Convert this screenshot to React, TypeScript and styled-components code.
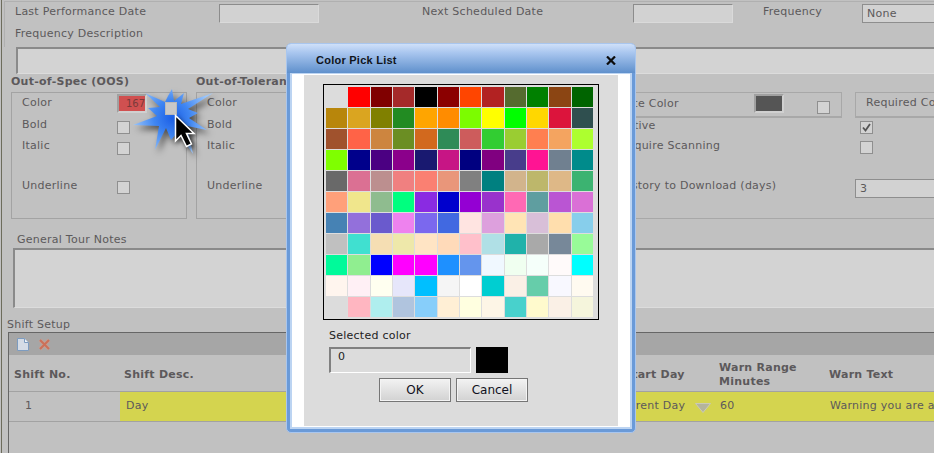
import React from 'react';
import styled, { createGlobalStyle } from 'styled-components';

const GlobalStyle = createGlobalStyle`
  html, body { margin: 0; padding: 0; background: #c1c1c1; }
  * { box-sizing: border-box; }
`;

const PALETTE = [
  '#dcdcdc', '#ff0000', '#800000', '#a52a2a', '#000000', '#8b0000', '#ff4500', '#b22222', '#556b2f', '#008000', '#8b4513', '#006400',
  '#b8860b', '#daa520', '#808000', '#228b22', '#ffa500', '#ff8c00', '#7cfc00', '#ffff00', '#00ff00', '#ffd700', '#dc143c', '#2f4f4f',
  '#a0522d', '#ff6347', '#cd853f', '#6b8e23', '#d2691e', '#2e8b57', '#cd5c5c', '#32cd32', '#9acd32', '#ff7f50', '#f4a460', '#adff2f',
  '#7fff00', '#00008b', '#4b0082', '#8b008b', '#191970', '#c71585', '#000080', '#800080', '#483d8b', '#ff1493', '#708090', '#008b8b',
  '#696969', '#db7093', '#bc8f8f', '#f08080', '#fa8072', '#e9967a', '#808080', '#008080', '#d2b48c', '#bdb76b', '#deb887', '#3cb371',
  '#ffa07a', '#f0e68c', '#8fbc8f', '#00ff7f', '#8a2be2', '#0000cd', '#9400d3', '#9932cc', '#ff69b4', '#5f9ea0', '#ba55d3', '#da70d6',
  '#4682b4', '#9370db', '#6a5acd', '#ee82ee', '#7b68ee', '#4169e1', '#ffe4e1', '#dda0dd', '#ffe4b5', '#d8bfd8', '#ffdead', '#87ceeb',
  '#c0c0c0', '#40e0d0', '#f5deb3', '#eee8aa', '#ffe4c4', '#ffdab9', '#ffc0cb', '#b0e0e6', '#20b2aa', '#a9a9a9', '#778899', '#98fb98',
  '#00fa9a', '#90ee90', '#0000ff', '#ff00ff', '#ff00ff', '#1e90ff', '#6495ed', '#f0f8ff', '#f0fff0', '#f5fffa', '#fffafa', '#00ffff',
  '#fff5ee', '#fff0f5', '#fffff0', '#e6e6fa', '#00bfff', '#f5f5f5', '#ffffff', '#00ced1', '#faf0e6', '#66cdaa', '#f8f8ff', '#fffaf0',
  '#dcdcdc', '#ffb6c1', '#afeeee', '#b0c4de', '#87cefa', '#ffefd5', '#ffffe0', '#fdf5e6', '#48d1cc', '#fffacd', '#faf0e6', '#f5f5dc',
];

const Page = styled.div`
  position: relative;
  width: 934px;
  height: 453px;
  overflow: hidden;
  background: #c1c1c1;
  color: #5c595b;
  font: 11px/14px "DejaVu Sans", Verdana, sans-serif;
  letter-spacing: 0.25px;
  &:before {
    content: '';
    position: absolute;
    left: 1px;
    top: 0;
    bottom: 0;
    width: 1px;
    background: #6d6c5c;
  }
`;

const TopRow = styled.div`
  display: grid;
  grid-template-columns: 204px 203px 211px 130px 99px 72px;
  height: 23px;
  margin: 1px 0 0 4px;
  padding: 2px 0 0 10px;
  border-top: 1px solid #b0b0b0;
  border-left: 1px solid #b0b0b0;
`;

const TopLabel = styled.div`
  height: 15px;
  padding-top: 1px;
  white-space: nowrap;
`;

const DateInput = styled.div`
  width: 100px;
  height: 19px;
  background: #d2d2d2;
  border: 1px solid #dadada;
  border-top-color: #8c8c8c;
  border-left-color: #8c8c8c;
`;

const SelectBox = styled.div`
  width: 100px;
  height: 19px;
  padding: 2px 4px;
  background: #d2d2d2;
  border: 1px solid #8e8e8e;
  border-right: 0;
`;

const FreqRow = styled.div`
  height: 23px;
  margin-left: 4px;
  padding: 3px 0 0 10px;
  border-left: 1px solid #b0b0b0;
`;

const WideArea = styled.div<{ $h: number; $left: number }>`
  height: ${(p) => p.$h}px;
  margin-left: ${(p) => p.$left}px;
  background: #d3d3d3;
  border-top: 2px solid #8a8a8a;
  border-left: 2px solid #8a8a8a;
  border-bottom: 1px solid #dcdcdc;
`;

const Headings = styled.div`
  display: grid;
  grid-template-columns: 185px 1fr;
  height: 18px;
  padding: 1px 0 0 11px;
  font-weight: 700;
`;

const Panels = styled.div`
  display: grid;
  grid-template-columns: 176px 404px 1fr;
  column-gap: 9px;
  height: 127px;
  margin-left: 11px;
`;

const Panel = styled.div`
  display: grid;
  grid-template-rows: 20px 24px 18px 20px 21px;
  padding-left: 10px;
  border: 1px solid #a3a3a3;
`;

const RightPanel = styled.div`
  display: grid;
  grid-template-rows: 24px 19px 21px 18px 21px;
  min-width: 0;
  border-bottom: 1px solid #a8a8a8;
  margin-left: 1px;
`;

const FieldRow = styled.div`
  display: grid;
  grid-template-columns: 95px 1fr;
  align-items: center;
`;

const WideRow = styled(FieldRow)`
  padding-left: 10px;
  grid-template-columns: 235px 1fr;
  white-space: nowrap;
`;

const ColorField = styled.div<{ $bg: string }>`
  width: 30px;
  height: 19px;
  padding: 1px 0 0 7px;
  overflow: hidden;
  white-space: nowrap;
  font-size: 10px;
  letter-spacing: 0;
  background: ${(p) => p.$bg};
  border: 2px solid #a0a0a0;
  border-right-color: #d0d0d0;
  border-bottom-color: #d0d0d0;
  color: #7a3a3a;
`;

const Check = styled.div<{ $inset?: number }>`
  display: flex;
  align-items: center;
  justify-content: center;
  width: 13px;
  height: 13px;
  margin-top: 4px;
  margin-left: ${(p) => p.$inset ?? 0}px;
  background: #d3d3d3;
  border: 1px solid #8f8f8f;
`;

const TopCells = styled.div`
  display: grid;
  grid-template-columns: 232px 1fr;
  column-gap: 13px;
  min-height: 0;
`;

const LateCell = styled.div`
  display: grid;
  grid-template-columns: 134px 63px 13px;
  align-items: center;
  padding: 0 0 2px 9px;
  border: 1px solid #a8a8a8;
  border-bottom: 2px solid #a8a8a8;
  white-space: nowrap;
`;

const SmallCheck = styled(Check)`
  margin-top: 8px;
`;

const RequiredCell = styled.div`
  padding: 3px 0 0 10px;
  overflow: hidden;
  white-space: nowrap;
  border: 1px solid #a8a8a8;
  border-right: 0;
  border-bottom: 2px solid #a8a8a8;
`;

const DaysInput = styled.div`
  width: 84px;
  height: 19px;
  margin-top: 5px;
  padding: 2px 4px;
  background: #d2d2d2;
  border: 1px solid #8e8e8e;
  border-right: 0;
`;

const NotesLabel = styled.div`
  height: 29px;
  padding: 14px 0 0 17px;
`;

const ShiftLabel = styled.div`
  height: 24px;
  padding: 10px 0 0 7px;
`;

const ShiftGrid = styled.div`
  margin-left: 8px;
  height: 125px;
  border-top: 1px solid #666666;
  border-left: 1px solid #666666;
`;

const GridToolbar = styled.div`
  display: flex;
  align-items: center;
  gap: 9px;
  height: 22px;
  padding-left: 8px;
  background: #a6a6a6;
`;

const GridCols = styled.div<{ $h: number }>`
  display: grid;
  grid-template-columns: 111px 496px 103px 110px 1fr;
  height: ${(p) => p.$h}px;
  border-bottom: 1px solid #a2a2a2;
`;

const HeadCell = styled.div<{ $offset?: number; $tall?: boolean }>`
  padding: ${(p) => (p.$tall ? 6 : 13)}px 0 0 ${(p) => p.$offset ?? 5}px;
  font-weight: 700;
  white-space: nowrap;
`;

const RowCell = styled.div<{ $offset?: number; $yellow?: boolean }>`
  display: flex;
  align-items: center;
  padding: 0 0 2px ${(p) => p.$offset ?? 5}px;
  background: ${(p) => (p.$yellow ? '#d4d44f' : 'transparent')};
  white-space: nowrap;
  overflow: hidden;
`;

const DropArrow = styled.svg`
  flex: none;
  margin: 4px 0 0 10px;
`;

const Burst = styled.svg`
  position: absolute;
  left: 125px;
  top: 85px;
  filter: drop-shadow(3px 4px 3px rgba(0, 0, 0, 0.6));
`;

const BurstSquare = styled.div`
  position: absolute;
  left: 165px;
  top: 102px;
  width: 12px;
  height: 13px;
  background: #c8c8c8;
  border: 1px solid #b9b9b9;
`;

const Cursor = styled.svg`
  position: absolute;
  left: 170px;
  top: 110px;
  filter: drop-shadow(2px 2px 2px rgba(0, 0, 0, 0.5));
`;

const Modal = styled.div`
  position: absolute;
  left: 286px;
  top: 43px;
  width: 350px;
  height: 390px;
  display: flex;
  flex-direction: column;
  border: 1px solid #a9c6ee;
  border-radius: 5px;
  background: #6a9ad8;
  overflow: hidden;
`;

const TitleBar = styled.div`
  display: flex;
  align-items: center;
  justify-content: space-between;
  flex: none;
  height: 29px;
  padding: 3px 19px 0 29px;
  background: linear-gradient(#cfe0f9, #a9c6ef 30%, #5f90cc);
  color: #10151c;
  font: 700 11px/14px "Liberation Sans", Arial, sans-serif;
`;

const ModalFrame = styled.div`
  flex: 1;
  margin: 0 3px 3px;
  padding: 1px 0 0;
  border: 2px solid #bcd4f2;
  border-top-width: 1px;
  background: #ffffff;
  display: flex;
  justify-content: center;
`;

const ModalBody = styled.div`
  width: 314px;
  height: 351px;
  padding: 9px 0 0 19px;
  background: #dcdcdc;
  color: #222222;
`;

const ColorTable = styled.div`
  display: grid;
  grid-template-columns: repeat(12, 1fr);
  grid-auto-rows: 20px;
  gap: 1px;
  width: 276px;
  height: 236px;
  padding: 2px 5px 2px 2px;
  background: #dddddd;
  border: 1px solid #000000;
`;

const ColorCell = styled.div<{ $color: string }>`
  background: ${(p) => p.$color};
`;

const SelectedLabel = styled.div`
  margin: 9px 0 4px 6px;
  height: 14px;
`;

const SelectedRow = styled.div`
  display: flex;
  gap: 5px;
  margin-left: 6px;
  height: 26px;
`;

const SelectedInput = styled.div`
  width: 142px;
  padding: 1px 0 0 7px;
  background: #dcdcdc;
  border: 2px solid #808080;
  border-right: 1px solid #ffffff;
  border-bottom: 1px solid #ffffff;
`;

const SelectedSwatch = styled.div`
  width: 32px;
  background: #000000;
`;

const Buttons = styled.div`
  display: flex;
  gap: 5px;
  margin: 5px 0 0 56px;
`;

const DialogButton = styled.button`
  width: 72px;
  height: 24px;
  padding: 0;
  background: linear-gradient(#f3f3f3, #d2d2d2);
  border: 1px solid #767676;
  box-shadow: inset 0 0 0 1px #f4f4f4;
  color: #101020;
  font: 12px "DejaVu Sans", Verdana, sans-serif;
`;

const CheckMark = () => (
  <svg width="11" height="11" viewBox="0 0 11 11">
    <path d="M2 5.5 L4.5 8.5 L9 2" fill="none" stroke="#555" strokeWidth="1.8" />
  </svg>
);

const FormatPanel = ({ bg }: { bg: string }) => (
  <Panel>
    <FieldRow>
      Color
      <ColorField $bg={bg}>167</ColorField>
    </FieldRow>
    <FieldRow>
      Bold
      <Check />
    </FieldRow>
    <FieldRow>
      Italic
      <Check />
    </FieldRow>
    <div />
    <FieldRow>
      Underline
      <Check />
    </FieldRow>
  </Panel>
);

export default function App() {
  return (
    <Page>
      <GlobalStyle />
      <TopRow>
        <TopLabel>Last Performance Date</TopLabel>
        <DateInput />
        <TopLabel>Next Scheduled Date</TopLabel>
        <DateInput />
        <TopLabel>Frequency</TopLabel>
        <SelectBox>None</SelectBox>
      </TopRow>
      <FreqRow>Frequency Description</FreqRow>
      <WideArea $h={27} $left={16} />
      <Headings>
        <div>Out-of-Spec (OOS)</div>
        <div>Out-of-Tolerance</div>
      </Headings>
      <Panels>
        <FormatPanel bg="#d05050" />
        <FormatPanel bg="#d05050" />
        <RightPanel>
          <TopCells>
            <LateCell>
              Late Color
              <ColorField $bg="#555555" />
              <SmallCheck />
            </LateCell>
            <RequiredCell>Required Color</RequiredCell>
          </TopCells>
          <WideRow>
            Active
            <Check $inset={5}>
              <CheckMark />
            </Check>
          </WideRow>
          <WideRow>
            Require Scanning
            <Check $inset={5} />
          </WideRow>
          <div />
          <WideRow>
            History to Download (days)
            <DaysInput>3</DaysInput>
          </WideRow>
        </RightPanel>
      </Panels>
      <NotesLabel>General Tour Notes</NotesLabel>
      <WideArea $h={60} $left={13} />
      <ShiftLabel>Shift Setup</ShiftLabel>
      <ShiftGrid>
        <GridToolbar>
          <svg width="12" height="13" viewBox="0 0 12 13">
            <path d="M0.5 0.5 H7.5 L11.5 4.5 V12.5 H0.5 Z" fill="#d5dce6" stroke="#7d9cc0" />
            <path d="M7.5 0.5 V4.5 H11.5" fill="#eef2f7" stroke="#7d9cc0" />
          </svg>
          <svg width="13" height="13" viewBox="0 0 13 13">
            <path d="M2 2 L11 11 M11 2 L2 11" fill="none" stroke="#c0a096" strokeWidth="4" />
            <path d="M2 2 L11 11 M11 2 L2 11" fill="none" stroke="#cc7058" strokeWidth="2" />
          </svg>
        </GridToolbar>
        <GridCols $h={37}>
          <HeadCell>Shift No.</HeadCell>
          <HeadCell $offset={4}>Shift Desc.</HeadCell>
          <HeadCell $offset={8}>Start Day</HeadCell>
          <HeadCell $offset={0} $tall>
            Warn Range
            <br />
            Minutes
          </HeadCell>
          <HeadCell $offset={0}>Warn Text</HeadCell>
        </GridCols>
        <GridCols $h={30}>
          <RowCell $offset={16}>1</RowCell>
          <RowCell $yellow $offset={6}>Day</RowCell>
          <RowCell $yellow $offset={0}>
            Current Day
            <DropArrow width="16" height="10" viewBox="0 0 16 10">
              <path d="M0.5 0.5 H15.5 L8 9.5 Z" fill="#b4b49c" stroke="#c9c9b8" />
            </DropArrow>
          </RowCell>
          <RowCell $yellow $offset={1}>60</RowCell>
          <RowCell $yellow $offset={1}>Warning you are about</RowCell>
        </GridCols>
      </ShiftGrid>

      <Burst width="100" height="75" viewBox="125 85 100 75">
        <defs>
          <radialGradient id="burstFill" gradientUnits="userSpaceOnUse" cx="172" cy="118" r="40">
            <stop offset="0" stopColor="#1c5fe6" />
            <stop offset="0.45" stopColor="#3f86f2" />
            <stop offset="1" stopColor="#9cc6fa" />
          </radialGradient>
        </defs>
        <polygon
          fill="url(#burstFill)"
          points="172,89 174,101 184,93 181,104 213,93 188,109 198,113 189,118 207,130 187,126 193,154 178,132 171,140 166,128 155,150 159,126 133,125 157,116 148,108 160,107 145,93 165,102 168,96"
        />
      </Burst>
      <BurstSquare />
      <Cursor width="30" height="42" viewBox="170 110 30 42">
        <path
          d="M175.5 115.5 V141 L181 135.5 L186.5 146.5 L191.5 144 L186.5 133.5 L194 133.5 Z"
          fill="#000"
          stroke="#fff"
          strokeWidth="1.5"
        />
      </Cursor>

      <Modal>
        <TitleBar>
          Color Pick List
          <svg width="10" height="9" viewBox="0 0 10 9">
            <path d="M1 0.5 L9 8.5 M9 0.5 L1 8.5" fill="none" stroke="#0c0c0c" strokeWidth="2.2" />
          </svg>
        </TitleBar>
        <ModalFrame>
          <ModalBody>
            <ColorTable>
              {PALETTE.map((c, i) => (
                <ColorCell key={i} $color={c} />
              ))}
            </ColorTable>
            <SelectedLabel>Selected color</SelectedLabel>
            <SelectedRow>
              <SelectedInput>0</SelectedInput>
              <SelectedSwatch />
            </SelectedRow>
            <Buttons>
              <DialogButton>OK</DialogButton>
              <DialogButton>Cancel</DialogButton>
            </Buttons>
          </ModalBody>
        </ModalFrame>
      </Modal>
    </Page>
  );
}
